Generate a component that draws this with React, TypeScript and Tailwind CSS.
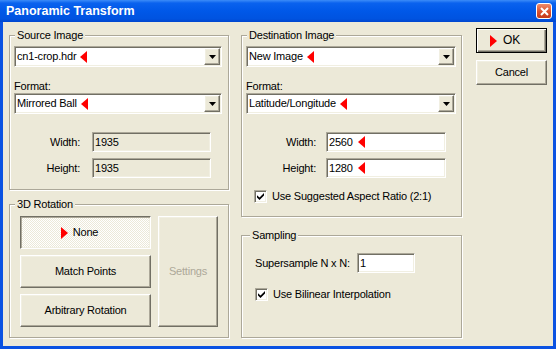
import React from 'react';

const sunken =
  'border border-t-[#ACA899] border-l-[#ACA899] border-b-white border-r-white shadow-[inset_1px_1px_0_#716F64,inset_-1px_-1px_0_#F1EFE2]';
const raised =
  'border border-t-white border-l-white border-b-[#716F64] border-r-[#716F64] shadow-[inset_-1px_-1px_0_#ACA899,inset_1px_1px_0_#F1EFE2]';
const pressed =
  'border border-t-[#716F64] border-l-[#716F64] border-b-white border-r-white shadow-[inset_1px_1px_0_#ACA899,inset_-1px_-1px_0_#F1EFE2]';
const group =
  'border border-[#ACA899] shadow-[inset_1px_1px_0_#fff,1px_1px_0_#fff] min-w-0';

const ArrowLeft = () => (
  <svg width="7" height="12" viewBox="0 0 7 12" className="shrink-0">
    <polygon points="7,0 7,12 0,6" fill="#FF0000" />
  </svg>
);

const ArrowRight = () => (
  <svg width="7" height="12" viewBox="0 0 7 12" className="shrink-0">
    <polygon points="0,0 0,12 7,6" fill="#FF0000" />
  </svg>
);

const Combo = ({ value, width }: { value: string; width: string }) => (
  <div className={`${width} h-[21px] bg-white flex items-center pl-[2px] pr-[1px] ${sunken}`}>
    <span className="flex-1 flex items-center gap-[4px]">
      {value}
      <ArrowLeft />
    </span>
    <div className={`w-[16px] h-[17px] bg-[#ECE9D8] flex items-center justify-center ${raised}`}>
      <svg width="7" height="4" viewBox="0 0 7 4">
        <polygon points="0,0 7,0 3.5,4" fill="#000" />
      </svg>
    </div>
  </div>
);

const Field = ({ value, width, disabled, marker }: { value: string; width: string; disabled?: boolean; marker?: boolean }) => (
  <div
    className={`${width} h-[20px] flex items-center gap-[5px] pl-[2px] ${disabled ? 'bg-[#ECE9D8]' : 'bg-white'} ${sunken}`}
  >
    {value}
    {marker && <ArrowLeft />}
  </div>
);

const Checkbox = () => (
  <span className={`w-[13px] h-[13px] bg-white flex items-center justify-center shrink-0 ${sunken}`}>
    <svg width="7" height="7" viewBox="0 0 7 7">
      <path d="M0 2.2 L2.5 4.6 L7 0.1 V2.5 L2.5 7 L0 4.5 Z" fill="#000" />
    </svg>
  </span>
);

export default function App() {
  return (
    <div className="w-[556px] h-[349px] flex flex-col bg-[#0A52E2] text-[11px] leading-[13px] tracking-[-0.2px] text-black font-['Liberation_Sans',Arial,sans-serif]">
      {/* title bar */}
      <div className="h-[22px] shrink-0 flex items-center justify-between pl-[6px] pr-[4px] bg-[linear-gradient(180deg,#3C8CF8_0%,#0A62EE_14%,#0058E8_50%,#0053E0_85%,#0046CE_100%)]">
        <span className="text-white font-bold text-[12.5px] tracking-normal">Panoramic Transform</span>
        <div className="w-[16px] h-[16px] rounded-[3px] border border-white bg-[linear-gradient(180deg,#EE8B6C,#D9512F_55%,#C43A1A)] flex items-center justify-center">
          <svg width="9" height="9" viewBox="0 0 9 9">
            <path d="M1 1 L8 8 M8 1 L1 8" stroke="#fff" strokeWidth="2" />
          </svg>
        </div>
      </div>

      <div className="flex-1 mx-[3px] mb-[3px] bg-[#ECE9D8] flex pl-[6px] pr-[6px]">
        {/* left column */}
        <div className="w-[220px] flex flex-col">
          <fieldset className={`mt-[7px] ${group}`}>
            <legend className="ml-[5px] px-[2px] leading-[13px] bg-[#ECE9D8]">Source Image</legend>
            <div className="pl-[4px] pt-[4px] pb-[11px]">
              <Combo value="cn1-crop.hdr" width="w-[208px]" />
              <div className="mt-[13px]">Format:</div>
              <Combo value="Mirrored Ball" width="w-[208px]" />
              <div className="mt-[18px] flex items-center">
                <span className="w-[66px] text-right">Width:</span>
                <div className="ml-[12px]">
                  <Field value="1935" width="w-[119px]" disabled />
                </div>
              </div>
              <div className="mt-[6px] flex items-center">
                <span className="w-[66px] text-right">Height:</span>
                <div className="ml-[12px]">
                  <Field value="1935" width="w-[119px]" disabled />
                </div>
              </div>
            </div>
          </fieldset>

          <fieldset className={`mt-[8px] ${group}`}>
            <legend className="ml-[5px] px-[2px] leading-[13px] bg-[#ECE9D8]">3D Rotation</legend>
            <div className="pl-[10px] pt-[5px] pb-[10px] flex gap-[7px]">
              <div className="w-[131px] flex flex-col gap-[6px]">
                <div
                  className={`h-[33px] flex items-center justify-center bg-[image:repeating-conic-gradient(#ffffff_0%_25%,#ECE9D8_0%_50%)] bg-[length:2px_2px] ${pressed}`}
                >
                  <ArrowRight />
                  <span className="ml-[5px] mr-[12px]">None</span>
                </div>
                <div className={`h-[33px] flex items-center justify-center bg-[#ECE9D8] ${raised}`}>Match Points</div>
                <div className={`h-[33px] flex items-center justify-center bg-[#ECE9D8] ${raised}`}>Arbitrary Rotation</div>
              </div>
              <div className={`w-[60px] h-[111px] flex items-center justify-center bg-[#ECE9D8] text-[#ACA899] ${raised}`}>
                Settings
              </div>
            </div>
          </fieldset>
        </div>

        {/* middle column */}
        <div className="w-[221px] ml-[12px] flex flex-col">
          <fieldset className={`mt-[7px] ${group}`}>
            <legend className="ml-[5px] px-[2px] leading-[13px] bg-[#ECE9D8]">Destination Image</legend>
            <div className="pl-[4px] pt-[4px] pb-[13px]">
              <Combo value="New Image" width="w-[210px]" />
              <div className="mt-[13px]">Format:</div>
              <Combo value="Latitude/Longitude" width="w-[210px]" />
              <div className="mt-[18px] flex items-center">
                <span className="w-[70px] text-right">Width:</span>
                <div className="ml-[10px]">
                  <Field value="2560" width="w-[120px]" marker />
                </div>
              </div>
              <div className="mt-[6px] flex items-center">
                <span className="w-[70px] text-right">Height:</span>
                <div className="ml-[10px]">
                  <Field value="1280" width="w-[120px]" marker />
                </div>
              </div>
              <div className="mt-[12px] ml-[8px] h-[13px] flex items-center">
                <Checkbox />
                <span className="ml-[5px]">Use Suggested Aspect Ratio (2:1)</span>
              </div>
            </div>
          </fieldset>

          <fieldset className={`mt-[12px] ${group}`}>
            <legend className="ml-[8px] px-[2px] leading-[13px] bg-[#ECE9D8]">Sampling</legend>
            <div className="pl-[13px] pt-[11px] pb-[36px]">
              <div className="flex items-center">
                <span className="w-[102px]">Supersample N x N:</span>
                <Field value="1" width="w-[58px]" />
              </div>
              <div className="mt-[15px] h-[13px] flex items-center">
                <Checkbox />
                <span className="ml-[5px]">Use Bilinear Interpolation</span>
              </div>
            </div>
          </fieldset>
        </div>

        {/* buttons */}
        <div className="w-[71px] ml-[14px] flex flex-col gap-[7px] pt-[6px]">
          <div className="h-[25px] flex items-center justify-center bg-[#ECE9D8] border border-black shadow-[inset_1px_1px_0_#fff,inset_-1px_-1px_0_#716F64,inset_-2px_-2px_0_#ACA899]">
            <ArrowRight />
            <span className="ml-[6px] mr-[13px] text-[12px]">OK</span>
          </div>
          <div className={`h-[25px] flex items-center justify-center bg-[#ECE9D8] ${raised}`}>Cancel</div>
        </div>
      </div>
    </div>
  );
}
